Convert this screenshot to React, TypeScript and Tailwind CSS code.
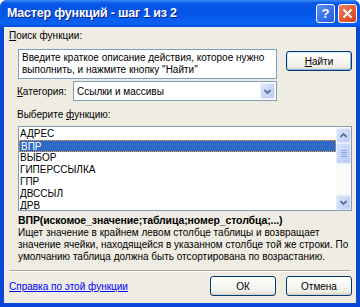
import React from "react";

const items = ["АДРЕС", "ВПР", "ВЫБОР", "ГИПЕРССЫЛКА", "ГПР", "ДВССЫЛ", "ДРВ"];

const Chevron = ({ up }: { up?: boolean }) => (
  <svg width="7" height="5" viewBox="0 0 7 5">
    <path
      d={up ? "M0.5 4 L3.5 1 L6.5 4" : "M0.5 1 L3.5 4 L6.5 1"}
      fill="none"
      stroke="#4D6185"
      strokeWidth="1.6"
    />
  </svg>
);

const ScrollBtn = ({ up }: { up?: boolean }) => (
  <div className="w-[15px] h-[15px] rounded-[2px] border border-[#E8EEFD] bg-[linear-gradient(135deg,#DCE6FC,#B9CCF6)] flex items-center justify-center">
    <Chevron up={up} />
  </div>
);

const XpButton = ({ label, u, w, def }: { label: string; u?: number; w: string; def?: boolean }) => (
  <div
    className={`${w} h-[20px] rounded-[3px] border border-[#003C74] bg-[linear-gradient(to_bottom,#FFFFFF,#F0F0EA_80%,#D6D0C5)] flex items-center justify-center ${def ? "shadow-[inset_-1px_-1px_0_#97AEE2,inset_1px_1px_0_#CEE7FF]" : ""}`}
  >
    {u !== undefined ? (
      <span>
        {label.slice(0, u)}
        <span className="underline">{label[u]}</span>
        {label.slice(u + 1)}
      </span>
    ) : (
      <span>{label}</span>
    )}
  </div>
);

export default function App() {
  return (
    <div className="w-[360px] h-[307px] flex flex-col rounded-t-[7px] overflow-hidden bg-[#0A46D8] font-['Liberation_Sans',Arial,sans-serif] text-[10px] text-black">
      {/* title bar */}
      <div className="h-[27px] shrink-0 flex items-center pl-[7px] pr-[3px] bg-[linear-gradient(to_bottom,#3C8CF8_0%,#0858EA_12%,#0254E6_45%,#0A62F2_85%,#0350E0_100%)]">
        <span className="flex-1 text-white font-bold text-[12.5px] tracking-[-0.2px] [text-shadow:1px_1px_0_#0A1E8C]">
          Мастер функций - шаг 1 из 2
        </span>
        <div className="w-[19px] h-[19px] rounded-[3px] border border-white bg-[linear-gradient(135deg,#5A8FF4,#2459E0)] flex items-center justify-center text-white font-bold text-[13px]">
          ?
        </div>
        <div className="ml-[3px] w-[19px] h-[19px] rounded-[3px] border border-white bg-[linear-gradient(135deg,#EC8060,#D6401A)] flex items-center justify-center">
          <svg width="11" height="11" viewBox="0 0 11 11">
            <path d="M1.5 1.5 L9.5 9.5 M9.5 1.5 L1.5 9.5" stroke="white" strokeWidth="2" />
          </svg>
        </div>
      </div>

      {/* dialog body */}
      <div className="flex-1 mx-[4px] mb-[4px] bg-[#EFEDE3] flex flex-col">
        <div className="pt-[3px] pl-[5px] leading-[12px]">
          <span className="underline">П</span>оиск функции:
        </div>

        <div className="mt-[7px] pl-[14px] flex items-start">
          <div className="w-[259px] h-[30px] border border-[#7F9DB9] bg-white px-[3px] pt-[2px] leading-[12px] whitespace-nowrap overflow-hidden">
            <div>Введите краткое описание действия, которое нужно</div>
            <div>выполнить, и нажмите кнопку "Найти"</div>
          </div>
          <div className="ml-[9px] mt-[2px]">
            <XpButton label="Найти" u={0} w="w-[66px]" def />
          </div>
        </div>

        <div className="mt-[2px] pl-[13px] flex items-center">
          <div className="w-[56px]">
            <span className="underline">К</span>атегория:
          </div>
          <div className="w-[204px] h-[20px] border border-[#7F9DB9] bg-white flex items-center pl-[3px] pr-[1px]">
            <span className="flex-1">Ссылки и массивы</span>
            <div className="w-[15px] h-[16px] rounded-[2px] border border-[#E8EEFD] bg-[linear-gradient(135deg,#DCE6FC,#B9CCF6)] flex items-center justify-center">
              <Chevron />
            </div>
          </div>
        </div>

        <div className="mt-[8px] pl-[13px] leading-[12px]">
          Выберите <span className="underline">ф</span>ункцию:
        </div>

        <div className="mt-[5px] ml-[14px] w-[334px] h-[85px] border border-[#7F9DB9] bg-white flex">
          <div className="flex-1 pt-[1px] overflow-hidden">
            {items.map((it) => (
              <div
                key={it}
                className={`h-[12px] leading-[12px] pl-[1px] ${
                  it === "ВПР" ? "bg-[#316AC5] text-white border border-dotted border-[#F0A030] leading-[10px]" : ""
                }`}
              >
                {it}
              </div>
            ))}
          </div>
          <div className="w-[15px] flex flex-col pt-[1px] bg-[#FAFAF6]">
            <ScrollBtn up />
            <div className="w-[15px] h-[21px] rounded-[2px] border border-[#E8EEFD] bg-[linear-gradient(135deg,#D6E2FC,#BACCF6)] flex flex-col items-center justify-center gap-[1px]">
              <div className="w-[6px] h-px bg-[#8CA8E8]" />
              <div className="w-[6px] h-px bg-[#8CA8E8]" />
              <div className="w-[6px] h-px bg-[#8CA8E8]" />
              <div className="w-[6px] h-px bg-[#8CA8E8]" />
            </div>
            <div className="flex-1" />
            <ScrollBtn />
          </div>
        </div>

        <div className="mt-[3px] pl-[14px] font-bold leading-[13px] text-[10.5px] tracking-[-0.1px]">
          ВПР(искомое_значение;таблица;номер_столбца;...)
        </div>
        <div className="pl-[14px] pr-[4px] leading-[12px] whitespace-nowrap">
          <div>Ищет значение в крайнем левом столбце таблицы и возвращает</div>
          <div>значение ячейки, находящейся в указанном столбце той же строки. По</div>
          <div>умолчанию таблица должна быть отсортирована по возрастанию.</div>
        </div>

        <div className="mt-[7px] ml-[5px] w-[342px] h-[2px] border-t border-[#ACA899] border-b border-b-white" />

        <div className="mt-[4px] pl-[5px] flex items-center">
          <span className="flex-1 text-[#0000FF] underline">Справка по этой функции</span>
          <XpButton label="ОК" w="w-[66px]" />
          <div className="w-[10px]" />
          <XpButton label="Отмена" w="w-[66px]" />
          <div className="w-[4px]" />
        </div>
      </div>
    </div>
  );
}
